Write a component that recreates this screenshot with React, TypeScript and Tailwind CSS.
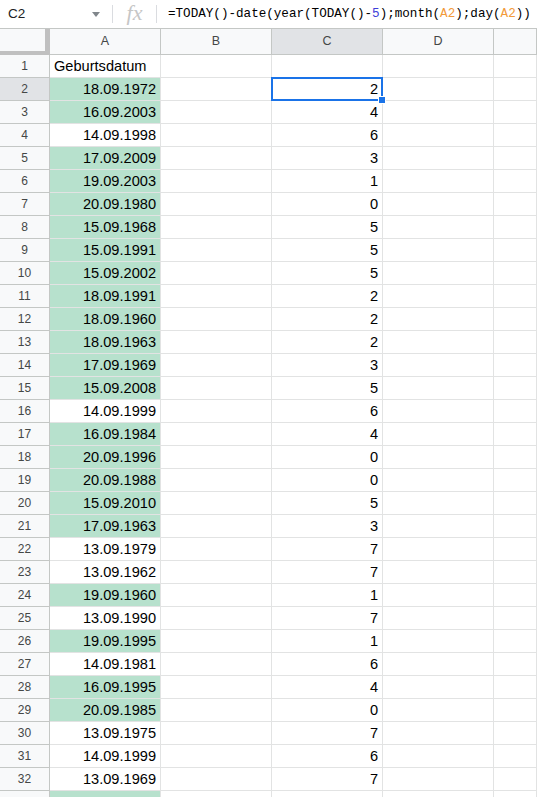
const rows: [string, boolean, string][] = [
  ["18.09.1972", true, "2"],
  ["16.09.2003", true, "4"],
  ["14.09.1998", false, "6"],
  ["17.09.2009", true, "3"],
  ["19.09.2003", true, "1"],
  ["20.09.1980", true, "0"],
  ["15.09.1968", true, "5"],
  ["15.09.1991", true, "5"],
  ["15.09.2002", true, "5"],
  ["18.09.1991", true, "2"],
  ["18.09.1960", true, "2"],
  ["18.09.1963", true, "2"],
  ["17.09.1969", true, "3"],
  ["15.09.2008", true, "5"],
  ["14.09.1999", false, "6"],
  ["16.09.1984", true, "4"],
  ["20.09.1996", true, "0"],
  ["20.09.1988", true, "0"],
  ["15.09.2010", true, "5"],
  ["17.09.1963", true, "3"],
  ["13.09.1979", false, "7"],
  ["13.09.1962", false, "7"],
  ["19.09.1960", true, "1"],
  ["13.09.1990", false, "7"],
  ["19.09.1995", true, "1"],
  ["14.09.1981", false, "6"],
  ["16.09.1995", true, "4"],
  ["20.09.1985", true, "0"],
  ["13.09.1975", false, "7"],
  ["14.09.1999", false, "6"],
  ["13.09.1969", false, "7"],
  ["", true, ""],
];

function RowHeader({ n, active }: { n: number; active?: boolean }) {
  return (
    <div
      className={`w-[50px] shrink-0 h-full flex items-center justify-center border-r border-b border-[#c4c7c5] text-[12px] text-[#444746] ${
        active ? "bg-[#e1e3e6]" : "bg-[#f8f9fa]"
      }`}
    >
      {n}
    </div>
  );
}

function Cell({
  children,
  green,
  right,
  last,
}: {
  children?: React.ReactNode;
  green?: boolean;
  right?: boolean;
  last?: boolean;
}) {
  return (
    <div
      className={`${last ? "flex-1" : "w-[111px] shrink-0"} h-full flex items-center px-[4px] pt-[1px] border-r border-b border-[#e2e3e3] text-[14.6px] text-black ${
        right ? "justify-end" : "justify-start"
      } ${green ? "bg-[#b7e1cd]" : "bg-white"}`}
    >
      {children}
    </div>
  );
}

export default function App() {
  return (
    <div
      className="w-[537px] h-[797px] overflow-hidden bg-white"
      style={{ fontFamily: '"Liberation Sans", Arial, sans-serif' }}
    >
      {/* formula bar */}
      <div className="h-[29px] flex items-center border-b border-[#c4c7c5] whitespace-nowrap overflow-hidden">
        <div className="w-[112px] shrink-0 flex items-center pl-[8px] pr-[8px] text-[13.5px] text-[#202124]">
          <span className="flex-1">C2</span>
          <svg width="8" height="5" viewBox="0 0 8 5" className="mr-[4px] mt-[1px]">
            <path d="M0 0h8L4 5z" fill="#80868b" />
          </svg>
        </div>
        <div className="w-px h-[18px] bg-[#dadce0] shrink-0" />
        <div
          className="w-[43px] shrink-0 text-center text-[22px] italic text-[#c6c6c6] leading-none -mt-[2px]"
          style={{ fontFamily: '"Liberation Serif", "Times New Roman", serif' }}
        >
          fx
        </div>
        <div className="w-px h-[18px] bg-[#dadce0] shrink-0" />
        <div
          className="pl-[11px] text-[12.6px] text-black"
          style={{ fontFamily: '"Liberation Mono", "Courier New", monospace' }}
        >
          =TODAY()-date(year(TODAY()-<span className="text-[#3d3dd8]">5</span>);month(
          <span className="text-[#f29a3a]">A2</span>);day(<span className="text-[#f29a3a]">A2</span>))
        </div>
      </div>

      {/* column headers */}
      <div className="h-[26px] flex">
        <div className="w-[50px] shrink-0 h-full bg-[#f8f9fa] border-r-[5px] border-b-4 border-[#c0c0c0]" />
        {["A", "B", "C", "D", ""].map((c, i) => (
          <div
            key={i}
            className={`${i === 4 ? "flex-1" : "w-[111px] shrink-0"} h-full flex items-center justify-center border-r border-b border-[#c4c7c5] text-[12.5px] text-[#444746] ${
              c === "C" ? "bg-[#e1e3e6]" : "bg-[#f8f9fa]"
            }`}
          >
            {c}
          </div>
        ))}
      </div>

      {/* body */}
      <div className="relative">
        <div className="h-[23px] flex">
          <RowHeader n={1} />
          <Cell>Geburtsdatum</Cell>
          <Cell />
          <Cell />
          <Cell />
          <Cell last />
        </div>
        {rows.map(([d, g, v], i) => (
          <div key={i} className="h-[23px] flex">
            <RowHeader n={i + 2} active={i === 0} />
            <Cell green={g} right>
              {d}
            </Cell>
            <Cell />
            <Cell right>{v}</Cell>
            <Cell />
            <Cell last />
          </div>
        ))}

        {/* selection on C2 */}
        <div className="absolute left-[271px] top-[22px] w-[112px] h-[24px] border-2 border-[#1a73e8] pointer-events-none">
          <div className="absolute -right-[5px] -bottom-[5px] w-[8px] h-[8px] bg-[#1a73e8] border border-white" />
        </div>
      </div>
    </div>
  );
}
